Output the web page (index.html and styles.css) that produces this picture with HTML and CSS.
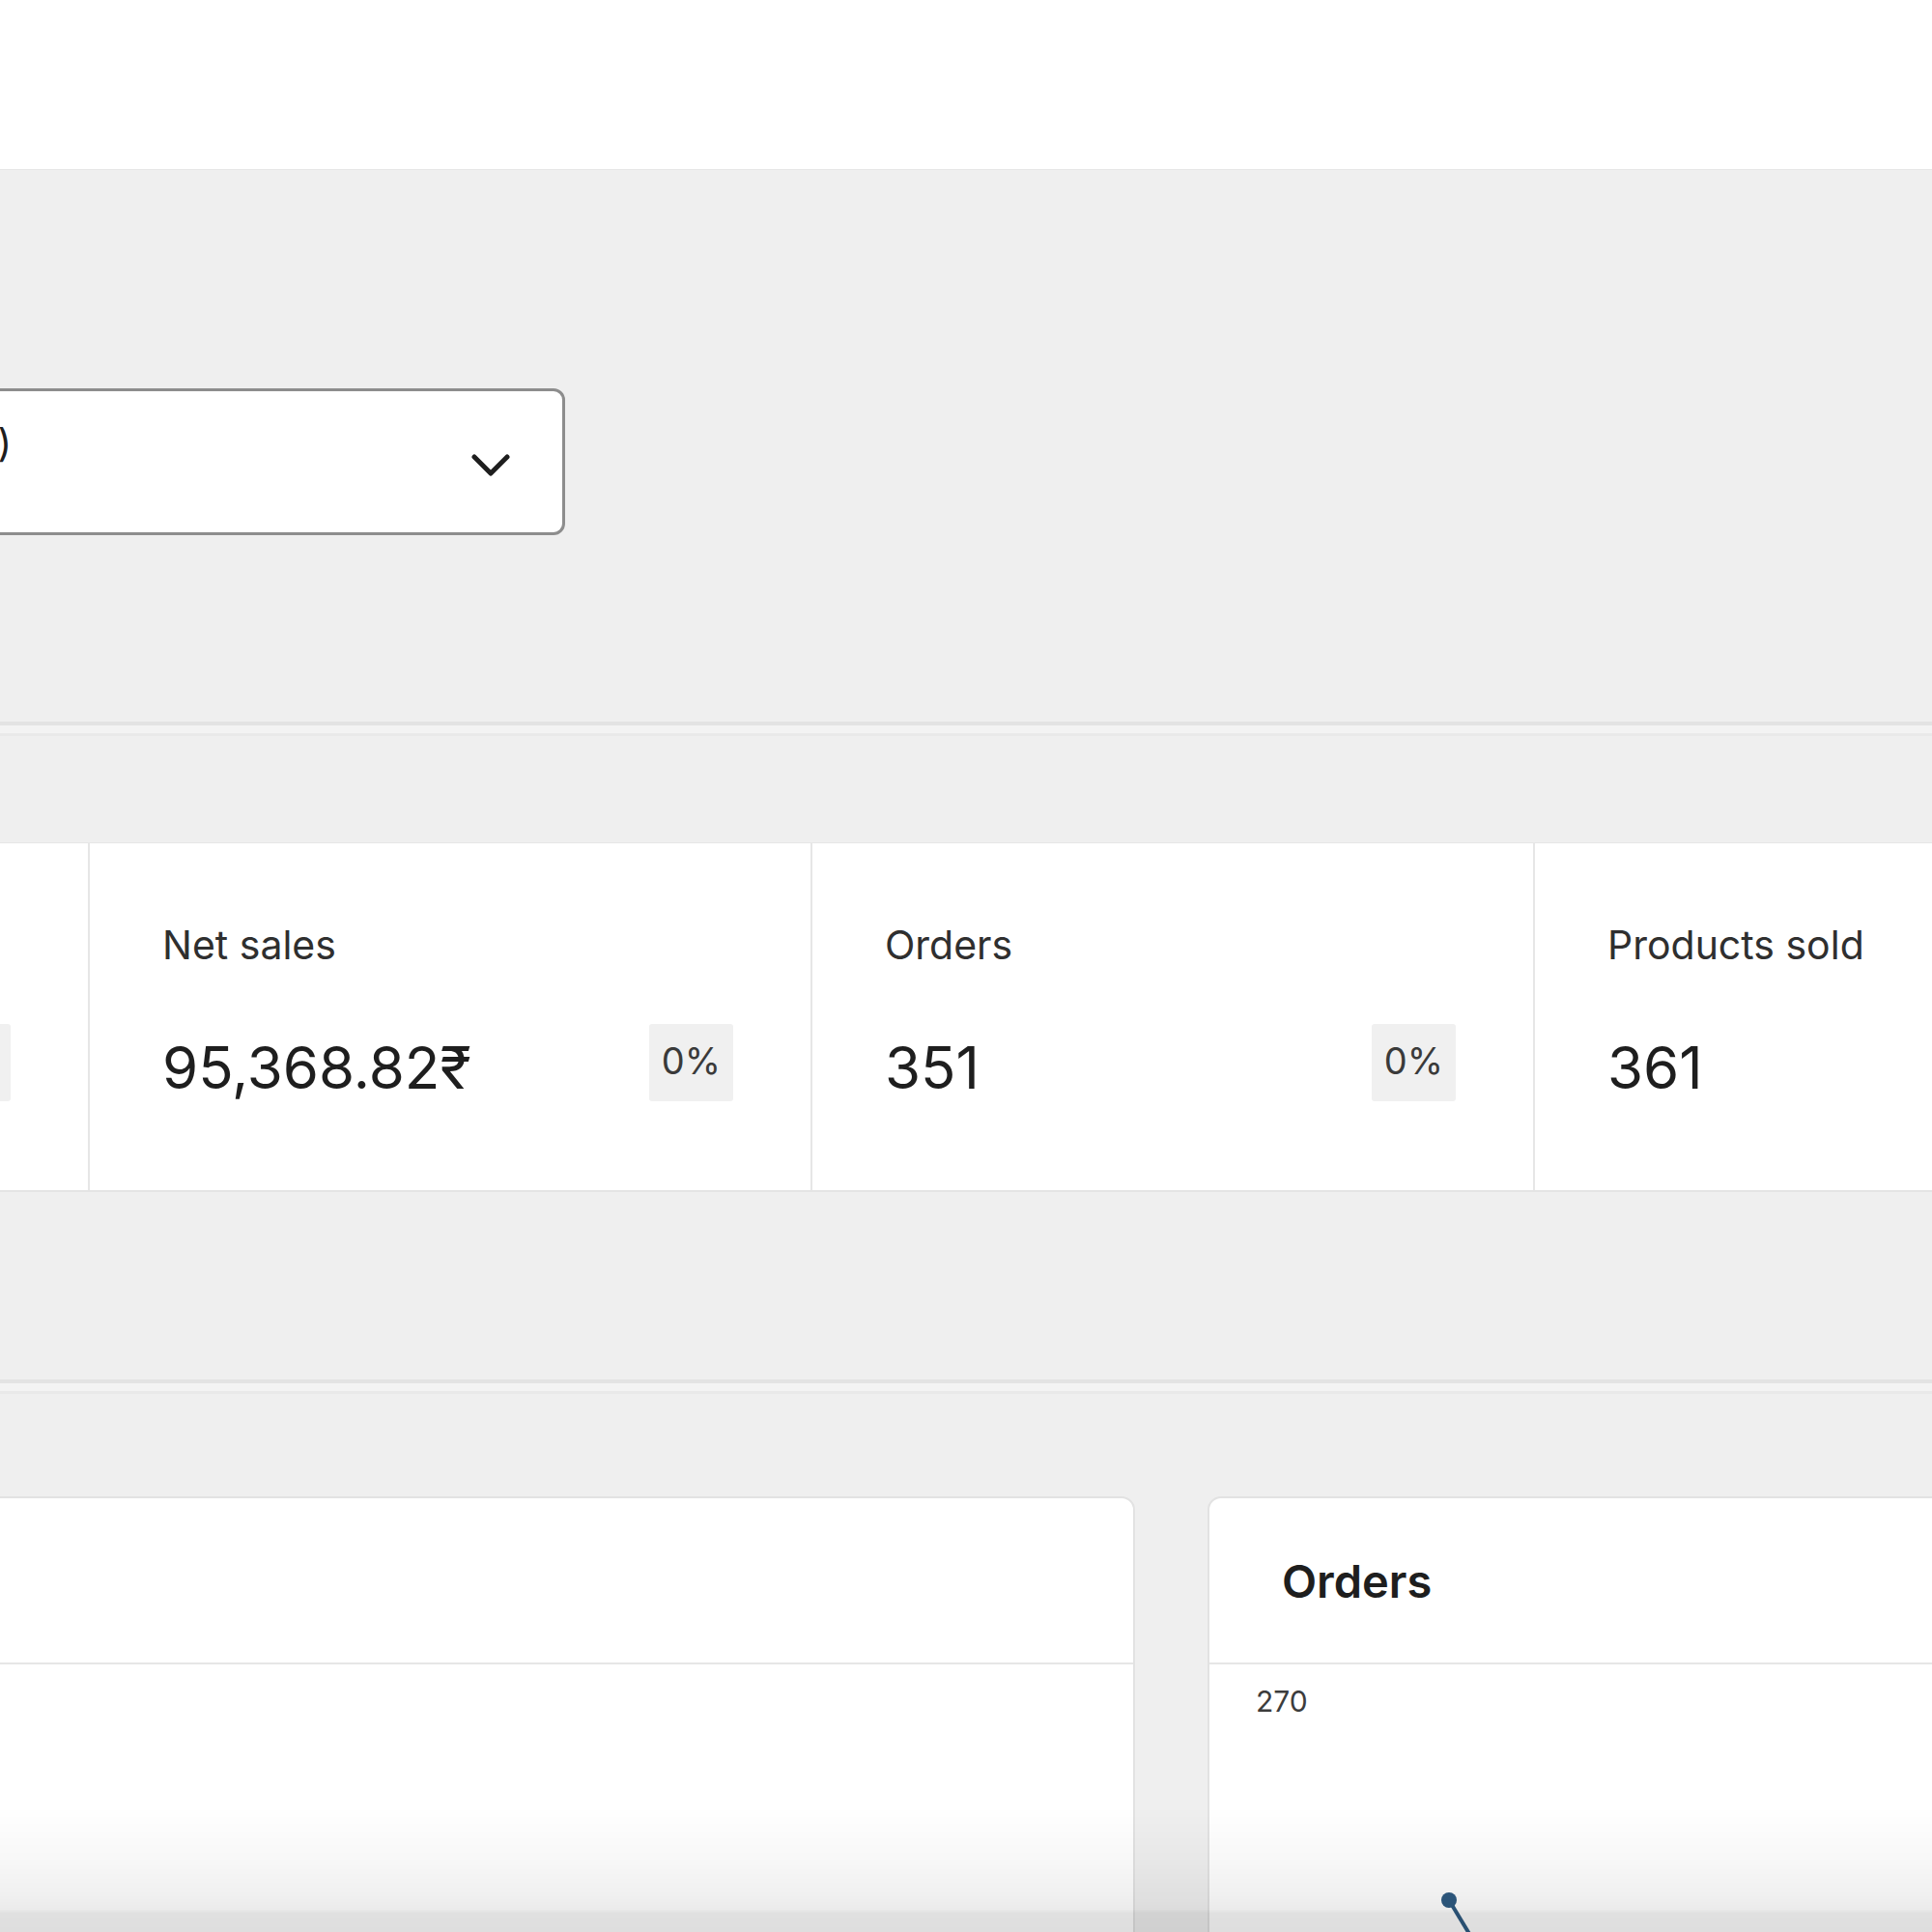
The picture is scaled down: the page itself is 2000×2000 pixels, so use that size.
FILE: index.html
```html
<!DOCTYPE html>
<html lang="en">
<head>
  <meta charset="UTF-8" />
  <title>Analytics Overview</title>
  <link rel="stylesheet" href="styles.css">
</head>
<body>

<header class="topbar"></header>

<main class="page">
  <section class="filters">
    <div class="range-select">
      <div class="range-text">
        <div class="range-primary">Year to date (Jan 1 - Dec 31, 2020)</div>
        <div class="range-secondary">vs. Previous year</div>
      </div>
      <svg class="chevron" width="40" height="24" viewBox="0 0 40 24">
        <polyline points="3,3 20,20 37,3" fill="none" stroke="#1e1e1e" stroke-width="5" stroke-linecap="round" stroke-linejoin="round"/>
      </svg>
    </div>
  </section>

  <div class="divider"></div>

  <section class="stats">
    <div class="stat">
      <div class="stat-label">Total sales</div>
      <div class="stat-row"><span class="stat-value">1,02,114.40₹</span><span class="badge">0%</span></div>
    </div>
    <div class="stat">
      <div class="stat-label">Net sales</div>
      <div class="stat-row"><span class="stat-value">95,368.82₹</span><span class="badge">0%</span></div>
    </div>
    <div class="stat">
      <div class="stat-label">Orders</div>
      <div class="stat-row"><span class="stat-value">351</span><span class="badge">0%</span></div>
    </div>
    <div class="stat">
      <div class="stat-label">Products sold</div>
      <div class="stat-row"><span class="stat-value">361</span><span class="badge">0%</span></div>
    </div>
  </section>

  <div class="divider"></div>

  <section class="charts">
    <div class="chart">
      <div class="chart-head"><h3>Net sales</h3></div>
      <div class="chart-body"></div>
    </div>
    <div class="chart">
      <div class="chart-head"><h3>Orders</h3></div>
      <div class="chart-body">
        <div class="axis-label">270</div>
        <svg class="plot" width="800" height="300" viewBox="0 0 800 300">
          <line x1="200" y1="188" x2="250" y2="271" stroke="#2f5b82" stroke-width="4"/>
          <circle cx="200" cy="188" r="8" fill="#2f5b82"/>
        </svg>
      </div>
    </div>
  </section>
</main>

<div class="fade"></div>

</body>
</html>
```

FILE: styles.css
```css
body {
  margin: 0;
  background: #efefef;
  font-family: Inter, "Noto Sans", "DejaVu Sans", sans-serif;
  color: #1e1e1e;
  overflow: hidden;
}
.topbar {
  height: 175px;
  background: #fff;
  border-bottom: 1px solid #e6e6e6;
}
.filters {
  padding: 226px 0 193px;
}
.range-select {
  display: flex;
  align-items: center;
  width: 1285px;
  height: 152px;
  margin-left: -700px;
  box-sizing: border-box;
  background: #fff;
  border: 3px solid #8d8d8d;
  border-radius: 12px;
}
.range-text {
  width: 709px;
  flex: none;
  padding-top: 14px;
}
.range-primary {
  font-size: 40px;
  line-height: 48px;
  text-align: right;
  white-space: nowrap;
}
.range-secondary {
  margin-top: 8px;
  font-size: 32px;
  line-height: 40px;
  color: #757575;
  white-space: nowrap;
}
.chevron {
  margin: 8px 54px 0 auto;
}
.divider {
  height: 8px;
  border-top: 4px solid #e3e3e3;
  border-bottom: 3px solid #e9e9e9;
  background: #f3f3f3;
}
.stats {
  display: flex;
  margin: 110px 0 194px -657px;
  background: #fff;
  border-top: 1px solid #e6e6e6;
  border-bottom: 2px solid #e4e4e4;
}
.stat {
  flex: none;
  width: 748px;
  box-sizing: border-box;
  padding: 81px 80px 92px 75px;
  border-left: 2px solid #e6e6e6;
}
.stat-label {
  font-size: 41px;
  line-height: 48px;
  color: #2f2f2f;
}
.stat-row {
  display: flex;
  align-items: center;
  justify-content: space-between;
  height: 70px;
  margin-top: 68px;
}
.stat-value {
  font-size: 60px;
  line-height: 70px;
  white-space: nowrap;
}
.badge {
  margin-bottom: 10px;
  background: #f0f0f0;
  color: #3a3a3a;
  font-size: 38px;
  line-height: 46px;
  padding: 15px 13px 19px;
  border-radius: 3px;
}
.charts {
  display: flex;
  gap: 75px;
  margin: 106px 0 0 -700px;
}
.chart {
  flex: none;
  width: 1875px;
  height: 700px;
  box-sizing: border-box;
  background: #fff;
  border: 2px solid #e2e2e2;
  border-radius: 14px;
}
.chart-head {
  display: flex;
  align-items: center;
  height: 170px;
  padding: 0 75px;
  border-bottom: 2px solid #e6e6e6;
}
.chart-head h3 {
  margin: 0;
  font-size: 47px;
  font-weight: 600;
  color: #1e1e1e;
}
.chart-body {
  padding: 20px 48px;
}
.axis-label {
  font-size: 30px;
  line-height: 36px;
  color: #3c3c3c;
}
.plot {
  display: block;
}
.fade {
  position: fixed;
  left: 0;
  right: 0;
  bottom: 0;
  height: 130px;
  pointer-events: none;
  background: linear-gradient(to bottom, rgba(0,0,0,0) 0%, rgba(0,0,0,0.03) 45%, rgba(0,0,0,0.06) 70%, rgba(0,0,0,0.08) 82%, rgba(0,0,0,0.12) 85%, rgba(0,0,0,0.13) 100%);
}
```
